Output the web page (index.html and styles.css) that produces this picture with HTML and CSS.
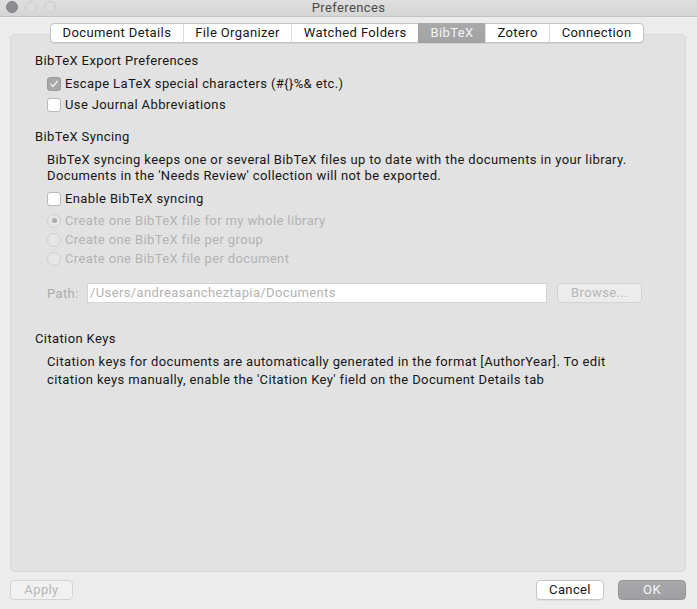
FILE: index.html
```html
<!DOCTYPE html>
<html>
<head>
<meta charset="utf-8">
<link rel="stylesheet" href="styles.css">
</head>
<body>
<div class="window">
  <div class="titlebar">
    <div class="lights">
      <span class="light filled"></span>
      <span class="light"></span>
      <span class="light"></span>
    </div>
    <div class="title">Preferences</div>
    <div></div>
  </div>
  <div class="tabs">
    <div class="tab">Document Details</div>
    <div class="tab">File Organizer</div>
    <div class="tab">Watched Folders</div>
    <div class="tab selected">BibTeX</div>
    <div class="tab">Zotero</div>
    <div class="tab">Connection</div>
  </div>
  <div class="box">
    <div class="heading h-export">BibTeX Export Preferences</div>
    <div class="indent">
      <div class="row check-row first">
        <span class="checkbox checked"><svg width="10" height="10" viewBox="0 0 10 10"><path d="M1.8 5.3 L4 7.6 L8.3 2.2" fill="none" stroke="#eeeeee" stroke-width="1.4" stroke-linecap="round" stroke-linejoin="round"/></svg></span>
        <span>Escape LaTeX special characters (#{}%&amp; etc.)</span>
      </div>
      <div class="row check-row">
        <span class="checkbox"></span>
        <span>Use Journal Abbreviations</span>
      </div>
    </div>
    <div class="heading h-sync">BibTeX Syncing</div>
    <div class="indent">
      <p class="para">BibTeX syncing keeps one or several BibTeX files up to date with the documents in your library.<br>Documents in the 'Needs Review' collection will not be exported.</p>
      <div class="row check-row enable">
        <span class="checkbox"></span>
        <span>Enable BibTeX syncing</span>
      </div>
      <div class="radios">
        <div class="row radio-row"><span class="radio on"></span><span>Create one BibTeX file for my whole library</span></div>
        <div class="row radio-row"><span class="radio"></span><span>Create one BibTeX file per group</span></div>
        <div class="row radio-row"><span class="radio"></span><span>Create one BibTeX file per document</span></div>
      </div>
      <div class="path-row">
        <span class="path-label">Path:</span>
        <div class="path-input">/Users/andreasancheztapia/Documents</div>
        <div class="btn browse">Browse...</div>
      </div>
    </div>
    <div class="heading h-cite">Citation Keys</div>
    <div class="indent">
      <p class="para para2">Citation keys for documents are automatically generated in the format [AuthorYear]. To edit<br>citation keys manually, enable the 'Citation Key' field on the Document Details tab</p>
    </div>
  </div>
  <div class="footer">
    <div class="btn apply">Apply</div>
    <div class="spacer"></div>
    <div class="btn cancel">Cancel</div>
    <div class="btn ok">OK</div>
  </div>
</div>
</body>
</html>
```

FILE: styles.css
```css
* { box-sizing: border-box; }
html, body {
  margin: 0;
  padding: 0;
  background: #ececec;
}
body {
  font-family: "Roboto", "Liberation Sans", sans-serif;
  font-size: 13px;
  letter-spacing: 0.38px;
  color: #161616;
}
.window {
  height: 609px;
  display: flex;
  flex-direction: column;
  overflow: hidden;
}
.titlebar {
  height: 17px;
  flex: none;
  display: grid;
  grid-template-columns: 1fr auto 1fr;
  align-items: center;
  background: linear-gradient(#dedede, #d5d5d5);
  border-bottom: 1px solid #c2c2c2;
}
.lights {
  display: flex;
  gap: 7px;
  padding-left: 6px;
  margin-top: -3px;
}
.light {
  width: 12px;
  height: 12px;
  border-radius: 50%;
  background: #dddcdd;
  border: 1px solid #cdcdcd;
}
.light.filled {
  background: #8d8c91;
  border-color: #838287;
}
.title {
  color: #4a4a4a;
  font-size: 13px;
  margin-top: -2px;
}
.tabs {
  flex: none;
  display: flex;
  align-self: center;
  margin-top: 6px;
  margin-bottom: -9px;
  margin-left: -3px;
  height: 20px;
  position: relative;
  z-index: 1;
  background: #fff;
  border: 1px solid #c3c3c3;
  border-radius: 4px;
  box-shadow: 0 1px 0 rgba(0,0,0,0.06);
}
.tab {
  padding: 0 11.5px;
  line-height: 18px;
  color: #161616;
  border-left: 1px solid #dcdcdc;
}
.tab:first-child { border-left: none; }
.tab.selected {
  background: linear-gradient(#a9a9ac, #a2a2a5);
  color: #f4f4f4;
  border-left-color: #a2a2a5;
  margin-top: -1px;
  margin-bottom: -1px;
  line-height: 20px;
}
.tab.selected + .tab { border-left-color: #dcdcdc; }
.box {
  flex: none;
  height: 538px;
  margin: 0 11px 0 10px;
  background: #e2e2e2;
  border: 1px solid #d9d9d9;
  border-radius: 5px;
  padding: 18px 0 0 24px;
}
.heading {
  line-height: 16px;
  color: #161616;
}
.h-sync { margin-top: 14px; }
.h-cite { margin-top: 28px; }
.indent { padding-left: 12px; }
.row {
  display: flex;
  align-items: center;
}
.check-row { height: 21px; gap: 4px; }
.check-row.first { margin-top: 4px; }
.checkbox {
  width: 14px;
  height: 14px;
  border-radius: 3px;
  background: #fff;
  border: 1px solid #b9b9b9;
  display: flex;
  align-items: center;
  justify-content: center;
  flex: none;
}
.checkbox.checked {
  background: #a8a8aa;
  border-color: #9a9a9c;
}
.para {
  margin: 7px 0 0 0;
  line-height: 16px;
}
.para2 { margin-top: 6px; line-height: 18px; }
.enable { margin-top: 4px; }
.radios { margin-top: 2px; color: #b3b3b3; }
.radio-row { height: 19px; gap: 4px; }
.radio {
  width: 14px;
  height: 14px;
  border-radius: 50%;
  background: #e6e6e6;
  border: 1px solid #cfcfcf;
  flex: none;
  display: flex;
  align-items: center;
  justify-content: center;
}
.radio.on::after {
  content: "";
  width: 5px;
  height: 5px;
  border-radius: 50%;
  background: #acacac;
}
.path-row {
  display: flex;
  align-items: center;
  margin-top: 15px;
  height: 20px;
  padding-right: 44px;
}
.path-label {
  color: #adadad;
  width: 40px;
  flex: none;
}
.path-input {
  width: 460px;
  height: 20px;
  background: #fff;
  border: 1px solid #d3d3d3;
  color: #b3b3b3;
  line-height: 18px;
  padding-left: 2px;
  flex: none;
}
.btn {
  height: 20px;
  line-height: 18px;
  text-align: center;
  border-radius: 4px;
  flex: none;
}
.browse {
  margin-left: 10px;
  width: 85px;
  background: #ececec;
  border: 1px solid #d2d2d2;
  color: #b6b6b6;
}
.footer {
  display: flex;
  align-items: center;
  padding: 8px 11px 0 10px;
}
.spacer { flex: 1; }
.apply {
  width: 63px;
  background: #f1f1f1;
  border: 1px solid #d4d4d4;
  color: #b7b7b7;
}
.cancel {
  width: 68px;
  background: #fff;
  border: 1px solid #c6c6c6;
  color: #161616;
  box-shadow: 0 1px 0 rgba(0,0,0,0.05);
}
.ok {
  width: 68px;
  margin-left: 14px;
  background: linear-gradient(#a8a8ab, #9f9fa2);
  border: 1px solid #98989b;
  color: #f7f7f7;
}
```
